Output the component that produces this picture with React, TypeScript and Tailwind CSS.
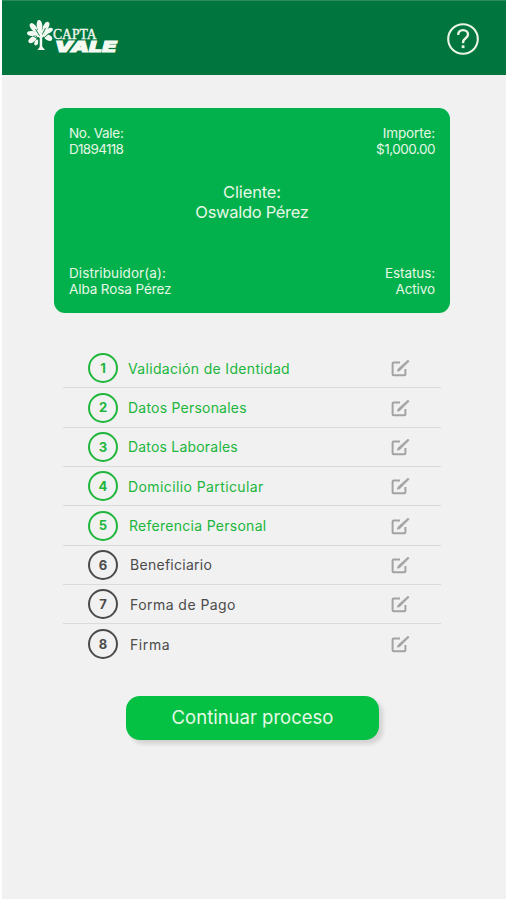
import React from 'react';
import { clsx } from 'clsx';

interface Step {
  id: number;
  label: string;
  done: boolean;
  className: string;
}

const steps: Step[] = [
  { id: 1, label: 'Validación de Identidad', done: true, className: 'ml-[10px] tracking-[0.33px]' },
  { id: 2, label: 'Datos Personales', done: true, className: 'ml-[10px] tracking-[0.22px]' },
  { id: 3, label: 'Datos Laborales', done: true, className: 'ml-[10px] tracking-[0.2px]' },
  { id: 4, label: 'Domicilio Particular', done: true, className: 'ml-[10px] tracking-[0.4px]' },
  { id: 5, label: 'Referencia Personal', done: true, className: 'ml-[11px] tracking-[0.28px]' },
  { id: 6, label: 'Beneficiario', done: false, className: 'ml-[12px] tracking-[0.28px]' },
  { id: 7, label: 'Forma de Pago', done: false, className: 'ml-[12px] tracking-[0.45px]' },
  { id: 8, label: 'Firma', done: false, className: 'ml-[12px] tracking-[0.6px]' },
];

function Logo() {
  return (
    <svg width="92" height="38" viewBox="0 0 92 38" fill="#f4faf2" aria-label="Capta Vale">
      {/* Tree */}
      <g>
        <ellipse cx="12.5" cy="5.5" rx="2.8" ry="5.6" transform="rotate(-6 12.5 5.5)" />
        <ellipse cx="6.5" cy="7.5" rx="2.7" ry="5" transform="rotate(-38 6.5 7.5)" />
        <ellipse cx="19" cy="6.5" rx="2.7" ry="5" transform="rotate(28 19 6.5)" />
        <ellipse cx="5" cy="13.5" rx="2.5" ry="5" transform="rotate(-86 5 13.5)" />
        <ellipse cx="21.5" cy="11" rx="2.4" ry="4.8" transform="rotate(60 21.5 11)" />
        <ellipse cx="5.5" cy="19.5" rx="2.6" ry="4.8" transform="rotate(50 5.5 19.5)" />
        <ellipse cx="21" cy="17.5" rx="2.7" ry="4.6" transform="rotate(-62 21 17.5)" />
        <ellipse cx="9.5" cy="22.5" rx="2" ry="3" transform="rotate(25 9.5 22.5)" />
        <circle cx="13.3" cy="13.5" r="4.6" />
      </g>
      <path
        d="M8.5 9l4.2 7M18.5 8l-3.6 7M6 16l6.2 3.4M21.5 14l-6 5M11.6 17v8M16.2 18v7"
        stroke="#00753e"
        strokeWidth="0.9"
        fill="none"
      />
      <path d="M12.8 13h2.4v13.5l2.8 3.6h-7.6l2.3-3.2z" />
      <text
        x="26"
        y="19.3"
        fontFamily="Liberation Serif, serif"
        fontSize="14"
        textLength="43.5"
        lengthAdjust="spacingAndGlyphs"
        stroke="#f4faf2"
        strokeWidth="0.35"
      >
        CAPTA
      </text>
      <text
        x="27.5"
        y="32"
        fontFamily="Inter, sans-serif"
        fontWeight="900"
        fontStyle="italic"
        fontSize="15"
        textLength="62"
        lengthAdjust="spacingAndGlyphs"
        stroke="#f4faf2"
        strokeWidth="0.9"
      >
        VALE
      </text>
    </svg>
  );
}

function HelpIcon() {
  return (
    <svg width="34" height="34" viewBox="0 0 34 34" fill="none" stroke="#eaf5e6" strokeWidth="2.1">
      <circle cx="17" cy="17" r="14.8" />
      <path d="M12.2 13c0-3.2 1.9-4.9 4.8-4.9s5 1.8 5 4.4c0 3.8-4.9 3.7-4.9 7.7v1" strokeWidth="2.4" />
      <path d="M17.1 23.3v2.8" strokeWidth="2.8" />
    </svg>
  );
}

function EditIcon() {
  return (
    <svg width="20" height="20" viewBox="0 0 20 20" fill="none" stroke="#a3a3a3" strokeWidth="2">
      <path d="M10 4.4H3.6q-1 0-1 1v10.8q0 1 1 1h10.8q1 0 1-1V11" />
      <path d="M7.4 13.2l.6-2.1 10-9 1.1 1.2-9.4 9.4z" fill="#a3a3a3" strokeWidth="0.7" />
    </svg>
  );
}

function StepRow({ step, last }: { step: Step; last: boolean }) {
  return (
    <li
      className={clsx(
        'flex h-[39.35px] items-center pl-[25px] pr-[31px]',
        step.done ? 'text-[#20b63c]' : 'text-[#4b4b4b]',
        !last && 'border-b-[1.5px] border-[#dadada]'
      )}
    >
      <span
        className={clsx(
          'flex size-[30px] items-center justify-center rounded-full border-2 pt-px text-[13px] font-bold',
          step.done ? 'border-[#20b63c]' : 'border-[#4b4b4b]'
        )}
      >
        {step.id}
      </span>
      <span className={clsx('flex-1 whitespace-nowrap text-[14px]', step.className)}>{step.label}</span>
      <EditIcon />
    </li>
  );
}

export default function App() {
  return (
    <div className="h-[900px] w-full overflow-hidden border-b border-l-2 border-white bg-[#f1f1f1] font-['Inter',sans-serif]">
      {/* Header */}
      <header className="flex h-[75px] items-center justify-between border-t border-[#2c8a5c] bg-[#00753e] pl-[25px] pr-[26px] pt-[2px]">
        <Logo />
        <HelpIcon />
      </header>

      {/* Voucher card */}
      <section className="ml-[52px] mt-[33px] flex h-[205px] w-[396px] flex-col justify-between rounded-[11px] bg-[#03b14c] px-[15px] pb-[16px] pt-[17px] text-[13.5px] leading-[16px] text-[#e6f7e6]">
        <div className="flex justify-between">
          <div>
            <p className="tracking-[-0.3px]">No. Vale:</p>
            <p className="tracking-[-0.7px]">D1894118</p>
          </div>
          <div className="text-right">
            <p className="tracking-[-0.1px]">Importe:</p>
            <p className="tracking-[-0.5px]">$1,000.00</p>
          </div>
        </div>
        <div className="-mt-[19px] text-center text-[16.5px] leading-[20px]">
          <p className="tracking-[-0.15px]">Cliente:</p>
          <p className="tracking-[-0.3px]">Oswaldo Pérez</p>
        </div>
        <div className="flex justify-between">
          <div>
            <p className="tracking-[0.1px]">Distribuidor(a):</p>
            <p className="tracking-[-0.1px]">Alba Rosa Pérez</p>
          </div>
          <div className="text-right">
            <p className="tracking-[-0.1px]">Estatus:</p>
            <p className="tracking-[-0.1px]">Activo</p>
          </div>
        </div>
      </section>

      {/* Steps */}
      <ul className="ml-[61px] mt-[36px] w-[378px]">
        {steps.map((step, i) => (
          <StepRow key={step.id} step={step} last={i === steps.length - 1} />
        ))}
      </ul>

      <button className="ml-[124px] mt-[32px] flex h-[44px] w-[253px] items-center justify-center rounded-[14px] bg-[#04c144] text-[18.5px] text-[#e6f9e6] shadow-[4px_4px_4px_rgba(0,0,0,0.13)]">
        Continuar proceso
      </button>
    </div>
  );
}
